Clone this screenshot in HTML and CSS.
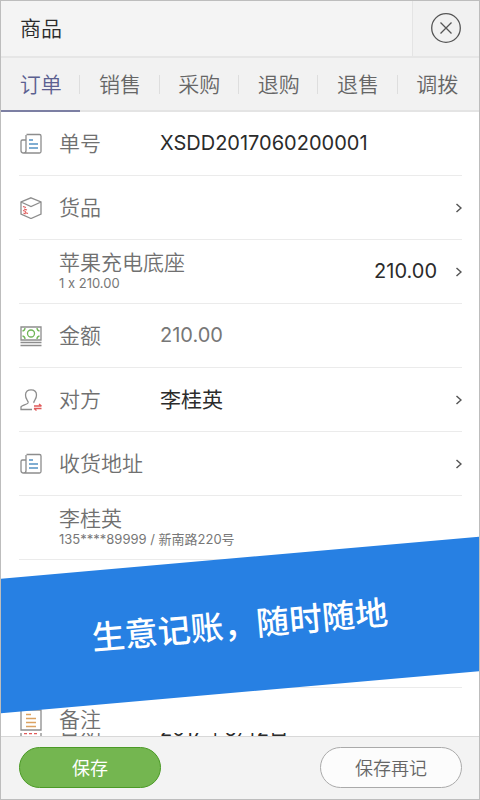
FILE: index.html
```html
<!DOCTYPE html>
<html lang="zh-CN">
<head>
<meta charset="utf-8">
<meta name="viewport" content="width=device-width, initial-scale=1">
<title>商品</title>
<link rel="stylesheet" href="styles.css">
</head>
<body>
<div class="screen">
  <header class="header">
    <h1 class="title">商品</h1>
    <button class="close" type="button" aria-label="关闭">
      <svg width="32" height="32" viewBox="0 0 32 32"><circle cx="16" cy="16" r="14.3"/><path d="M10.5 10.5l11 11M21.5 10.5l-11 11"/></svg>
    </button>
  </header>
  <nav class="tabs">
    <a class="tab active" href="#">订单</a>
    <a class="tab" href="#">销售</a>
    <a class="tab" href="#">采购</a>
    <a class="tab" href="#">退购</a>
    <a class="tab" href="#">退售</a>
    <a class="tab" href="#">调拨</a>
  </nav>
  <main class="list">
    <div class="row">
      <svg class="icon" viewBox="0 0 22 22"><path d="M6.5 1.500h13a1.500 1.500 0 0 1 1.500 1.500v15.500a1.500 1.500 0 0 1-1.500 1.500H3.500A2.500 2.500 0 0 1 1 17.500V8.500A1.500 1.500 0 0 1 2.500 7H6M6 2v15.500a2.500 2.500 0 0 1-2.500 2.500"/><path class="blue" d="M9 7h4M9 11h9M9 15h9"/></svg>
      <span class="label">单号</span>
      <span class="value">XSDD2017060200001</span>
    </div>
    <div class="row">
      <svg class="icon" viewBox="0 0 22 22"><path d="M11 .8L21 5v12l-10 4.500L1 17V5zM1 5l10 4.500L21 5"/><path class="red" d="M3 9.500l3 1M4 12l3 1M3 13.500l3 1M5 15.500l3 1M3.500 16l2 1"/></svg>
      <span class="label">货品</span>
      <svg class="chevron" viewBox="0 0 8 12"><path d="M2.500 2l4.500 4-4.500 4"/></svg>
    </div>
    <div class="row sub">
      <div class="detail"><span class="name">苹果充电底座</span><span class="note">1 x 210.00</span></div>
      <span class="amount">210.00</span>
      <svg class="chevron" viewBox="0 0 8 12"><path d="M2.500 2l4.500 4-4.500 4"/></svg>
    </div>
    <div class="row">
      <svg class="icon" viewBox="0 0 22 22"><path d="M1 2h20v13H1zM.5 17.500h21M.5 20.500h21"/><circle class="green" cx="11" cy="8.500" r="3.500"/><path class="green" d="M2.500 6Q5 5.500 5 3M17 3q0 2.500 2.500 3M2.500 11Q5 11.500 5 14M17 14q0-2.500 2.500-3"/></svg>
      <span class="label">金额</span>
      <span class="value muted">210.00</span>
    </div>
    <div class="row">
      <svg class="icon" viewBox="0 0 22 22"><path d="M12 20.500H1V18c0-1.500 6-2.500 7-4 .6-1-.1-2-.8-2.800C6 9.500 5.500 8 5.500 6 5.500 2.500 8 .8 11 .8s5.500 1.700 5.500 5.200c0 2-.5 3.500-1.700 5.200-.7.800-1.400 1.800-.8 2.800"/><path class="red" d="M14 17h7.500M19 15l2.500 2M21.500 19.500H14M14 19.500l2.500 2"/></svg>
      <span class="label">对方</span>
      <span class="value person">李桂英</span>
      <svg class="chevron" viewBox="0 0 8 12"><path d="M2.500 2l4.500 4-4.500 4"/></svg>
    </div>
    <div class="row">
      <svg class="icon" viewBox="0 0 22 22"><path d="M6.500 1.500h13a1.500 1.500 0 0 1 1.500 1.500v15.500a1.500 1.500 0 0 1-1.500 1.500H3.500A2.500 2.500 0 0 1 1 17.500V8.500A1.500 1.500 0 0 1 2.500 7H6M6 2v15.500a2.500 2.500 0 0 1-2.500 2.500"/><path class="blue" d="M9 7h4M9 11h9M9 15h9"/></svg>
      <span class="label wide">收货地址</span>
      <svg class="chevron" viewBox="0 0 8 12"><path d="M2.500 2l4.500 4-4.500 4"/></svg>
    </div>
    <div class="row sub">
      <div class="detail"><span class="name">李桂英</span><span class="note">135****89999 / 新南路220号</span></div>
    </div>
    <div class="row"></div>
    <div class="row"></div>
    <div class="row">
      <svg class="icon" viewBox="0 0 22 22"><path d="M1 1h20v20H1z"/><path class="orange" d="M6 5.500h5M6 9.500h10M6 13.500h10M6 17.500h10"/></svg>
      <span class="label">备注</span>
    </div>
    <div class="peek">
      <svg class="icon" viewBox="0 0 22 22"><path d="M1 0v22M21 0v22"/><path class="red" stroke-dasharray="3 2" d="M4 19.500h14"/></svg>
      <span class="label">日期</span>
      <span class="value">2017年6月2日</span>
    </div>
  </main>
  <footer class="footer">
    <button class="btn primary" type="button">保存</button>
    <button class="btn" type="button">保存再记</button>
  </footer>
  <div class="banner"><p class="slogan">生意记账，随时随地</p></div>
</div>
</body>
</html>
```
FILE: styles.css
```css
* {
  box-sizing: border-box;
}

body {
  margin: 0;
  font-family: Inter, "Noto Sans CJK SC", sans-serif;
  font-size: 20px;
  font-variant-ligatures: no-contextual;
  color: #2b2b2b;
}

svg {
  fill: none;
  flex: none;
}

.screen {
  position: relative;
  display: flex;
  flex-direction: column;
  height: 100vh;
  overflow: hidden;
  border: 1px solid #bdbdbd;
  background: #fff;
}

.title,
.tab,
.label,
.name,
.person,
.btn,
.slogan {
  font-family: "Noto Sans CJK SC", sans-serif;
  font-weight: 350;
}

.header {
  display: flex;
  flex: none;
  height: 57px;
  background: #f4f4f4;
  border-bottom: 2px solid #e6e6e6;
}

.title {
  flex: 1;
  margin: 0;
  padding-left: 19px;
  font-size: 21px;
  line-height: 52px;
}

.close {
  display: flex;
  align-items: center;
  justify-content: center;
  width: 67px;
  padding: 0 0 2px;
  border: 0;
  border-left: 1px solid #e4e4e4;
  background: #f1f1f1;
}

.close svg {
  stroke: #555;
  stroke-width: 1.3;
}

.tabs {
  display: flex;
  flex: none;
  height: 54px;
  padding-right: 2px;
  background: #f2f2f2;
  border-bottom: 2px solid #e4e4e4;
}

.tab {
  position: relative;
  flex: 1;
  font-size: 21px;
  line-height: 50px;
  text-align: center;
  text-decoration: none;
  color: #666;
}

.tab + .tab::before {
  content: "";
  position: absolute;
  left: -1px;
  top: 17px;
  height: 19px;
  border-left: 1px solid #dedede;
}

.tab.active {
  color: #5b6090;
}

.tab.active::after {
  content: "";
  position: absolute;
  left: 0;
  right: 0;
  bottom: -2px;
  height: 2px;
  background: #7c7fa3;
}

.list {
  position: relative;
  flex: 1;
  min-height: 0;
  overflow: hidden;
  padding: 0 17px 0 18px;
}

.row {
  display: flex;
  align-items: center;
  height: 64px;
  border-bottom: 1px solid #ebebeb;
}

.icon {
  width: 22px;
  height: 22px;
  margin: 0 17px 0 1px;
  stroke: #8d8d8d;
  stroke-width: 1.3;
}

.blue {
  stroke: #5692c4;
}

.red {
  stroke: #e05a5a;
}

.green {
  stroke: #6fb556;
}

.orange {
  stroke: #dba262;
}

.label {
  width: 101px;
  padding-bottom: 4px;
  font-size: 21px;
  line-height: 24px;
  color: #707070;
}

.label.wide {
  width: auto;
}

.value,
.amount {
  padding-bottom: 2px;
  line-height: 24px;
  white-space: nowrap;
}

.person {
  padding-bottom: 4px;
  font-size: 21px;
  font-weight: 400;
}

.muted {
  color: #777;
}

.chevron {
  width: 8px;
  height: 12px;
  margin-left: auto;
  stroke: #555;
  stroke-width: 1.5;
}

.sub {
  padding-left: 40px;
}

.detail {
  display: flex;
  flex: 1;
  flex-direction: column;
  gap: 2px;
  padding-bottom: 4px;
  color: #707070;
}

.name {
  font-size: 21px;
  line-height: 24px;
}

.note {
  font-size: 13px;
  line-height: 16px;
  color: #777;
}

.amount {
  margin-right: 17px;
}

.peek {
  position: absolute;
  left: 18px;
  right: 17px;
  bottom: 0;
  display: flex;
  align-items: flex-end;
  height: 3px;
  overflow: hidden;
  background: #fff;
}

.peek .label {
  padding-bottom: 0;
  line-height: 20px;
}

.peek .value {
  padding-bottom: 0;
  line-height: 14px;
}

.footer {
  display: flex;
  flex: none;
  align-items: center;
  justify-content: space-between;
  height: 63px;
  padding: 0 17px 1px 18px;
  background: #f3f3f3;
  border-top: 1px solid #d8d8d8;
}

.btn {
  width: 142px;
  height: 41px;
  padding: 0 0 2px;
  border: 1px solid #aaa;
  border-radius: 21px;
  background: #fcfcfc;
  font-size: 18px;
  color: #666;
}

.btn.primary {
  border-color: #4b9a26;
  background: #74b650;
  font-weight: 400;
  color: #fff;
}

.banner {
  position: absolute;
  left: -10%;
  right: -10%;
  bottom: 107px;
  display: flex;
  align-items: center;
  justify-content: center;
  height: 134px;
  padding-bottom: 4px;
  background: #2780e3;
  transform: rotate(-5deg);
}

.slogan {
  margin: 0;
  font-size: 33px;
  font-weight: 500;
  line-height: 48px;
  color: #fff;
}
```
